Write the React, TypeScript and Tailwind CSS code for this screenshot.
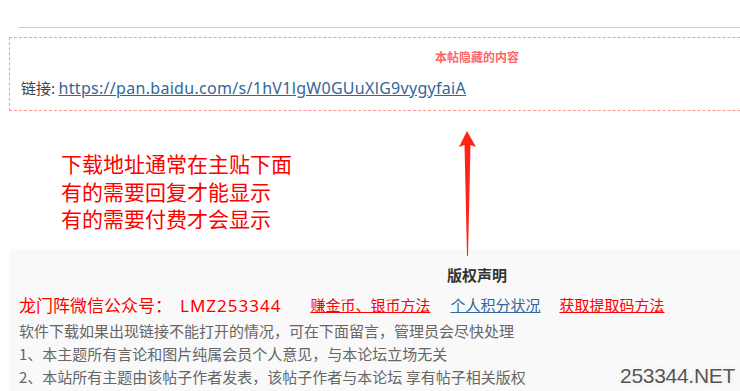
const cjk = "font-['Noto_Sans_CJK_SC','Microsoft_YaHei',sans-serif]";
const latin = "font-['Noto_Sans','Noto_Sans_CJK_SC',sans-serif]";

function UpArrow() {
  return (
    <svg
      className="absolute left-[457px] top-[131px]"
      width="22"
      height="126"
      viewBox="0 0 22 126"
    >
      <path d="M10 0 L19 16 L13.5 14 L11 125 L10 125 L7.5 14 L2 16 Z" fill="#ff2418" />
    </svg>
  );
}

export default function App() {
  return (
    <div className={`relative h-[391px] w-[740px] overflow-hidden bg-white ${cjk}`}>
      <div className="ml-[9px] w-[936px]">
        <div className="pl-[10px] pt-[27px]">
          <div className="h-px bg-[#cccccc]" />
        </div>

        {/* versteckter Inhalt */}
        <div className="mt-[9px] flex h-[74px] flex-col border border-dashed border-[#ff9999] px-[11px]">
          <div className="mt-[10px] text-center text-[12px] font-bold leading-[18px] text-[#ff6666]">
            本帖隐藏的内容
          </div>
          <div className="mt-[12px] text-[15px] leading-[20px] text-[#444444]">
            链接:{" "}
            <a href="#" className={`${latin} text-[16px] tracking-[0.3px] text-[#336699] underline`}>
              https://pan.baidu.com/s/1hV1lgW0GUuXlG9vygyfaiA
            </a>
          </div>
        </div>

        <div className="pl-[52px] pt-[39px] text-[21px] leading-[27.5px] text-[#ff0000]">
          <p>下载地址通常在主贴下面</p>
          <p>有的需要回复才能显示</p>
          <p>有的需要付费才会显示</p>
        </div>

        {/* Copyright */}
        <div className="mt-[16px] rounded-[4px] bg-[#f9f9f9] px-[10px] pb-4 pt-[16px]">
          <div className="text-center text-[15px] font-bold leading-[20px] text-[#333333]">
            版权声明
          </div>
          <div className="mt-[9px] flex items-center text-[15px] leading-[22px]">
            <span className="text-[17px] text-[#ff0000]">
              龙门阵微信公众号：
              <span className={`${latin} ml-[8px] tracking-[1px]`}>LMZ253344</span>
            </span>
            <a href="#" className="ml-[29px] text-[#ff0000] underline">
              赚金币、银币方法
            </a>
            <a href="#" className="ml-[20px] text-[#336699] underline">
              个人积分状况
            </a>
            <a href="#" className="ml-[19px] text-[#ff0000] underline">
              获取提取码方法
            </a>
          </div>
          <div className="mt-[2px] text-[15px] leading-[23px] text-[#666666]">
            <p>软件下载如果出现链接不能打开的情况，可在下面留言，管理员会尽快处理</p>
            <p>1、本主题所有言论和图片纯属会员个人意见，与本论坛立场无关</p>
            <p>2、本站所有主题由该帖子作者发表，该帖子作者与本论坛 享有帖子相关版权</p>
          </div>
        </div>
      </div>

      <UpArrow />

      <div className="absolute bottom-[2px] right-[5px] font-['Liberation_Sans',sans-serif] text-[21px] leading-[26px] tracking-[-0.3px] text-[#555555] [text-shadow:0_0_3px_#fff,0_0_3px_#fff,0_0_4px_#ddd]">
        253344.NET
      </div>
    </div>
  );
}
